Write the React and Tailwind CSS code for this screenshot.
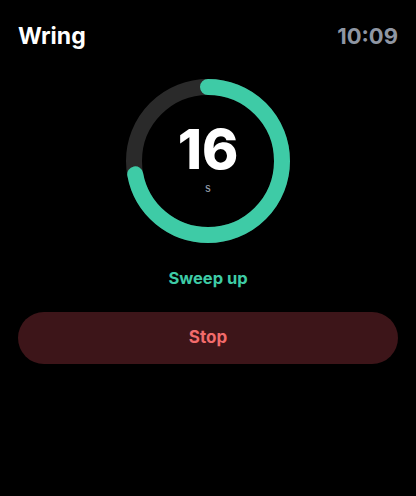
import React from "react";

const Ring = ({ value, fraction }) => {
  const r = 74;
  const c = 2 * Math.PI * r;
  return (
    <div className="relative w-[164px] h-[164px]">
      <svg width="164" height="164" viewBox="0 0 164 164" className="-rotate-90">
        <circle cx="82" cy="82" r={r} fill="none" stroke="#2a2a2a" strokeWidth="16" />
        <circle
          cx="82"
          cy="82"
          r={r}
          fill="none"
          stroke="#3ecba6"
          strokeWidth="16"
          strokeLinecap="round"
          strokeDasharray={c}
          strokeDashoffset={c * (1 - fraction)}
        />
      </svg>
      <div className="absolute inset-0 flex flex-col items-center pt-[43px]">
        <span className="text-white font-extrabold text-[55px] leading-none">{value}</span>
        <span className="text-gray-400 text-[11px] leading-none mt-[6px]">s</span>
      </div>
    </div>
  );
};

const App = () => {
  return (
    <div
      className="min-h-screen w-full bg-black px-[18px] flex flex-col"
      style={{ fontFamily: "Inter, 'Noto Sans', sans-serif" }}
    >
      {/* header */}
      <div className="flex items-center justify-between pt-[22px] h-[50px]">
        <span className="text-white font-bold text-[23px] leading-[28px]">Wring</span>
        <span className="text-[#8f96a3] font-bold text-[22px] leading-[28px]">10:09</span>
      </div>

      <div className="flex justify-center mt-[29px]">
        <Ring value={16} fraction={0.72} />
      </div>

      <p className="text-center text-[#3ecba6] font-bold text-[16.5px] leading-[24px] mt-[23px]">
        Sweep up
      </p>

      <button className="mt-[22px] h-[52px] w-full rounded-full bg-[#3d1519] text-[#f26b6b] font-bold text-[17px]">
        Stop
      </button>
    </div>
  );
};

export default App;
